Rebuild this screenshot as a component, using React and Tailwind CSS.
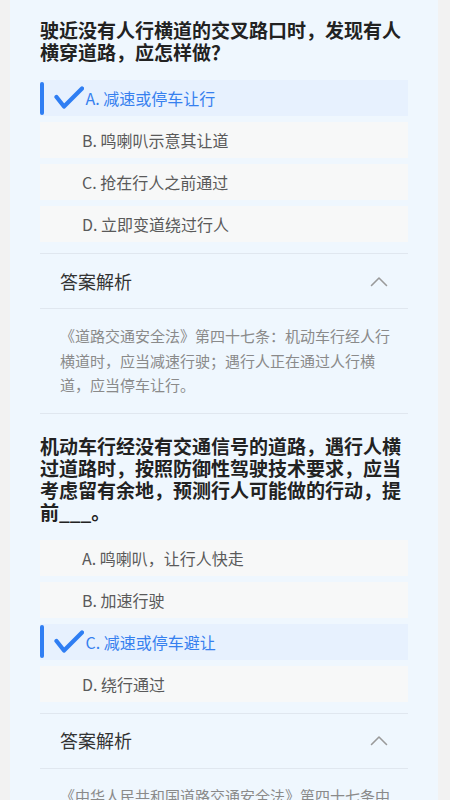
import React from "react";

const FONT = { fontFamily: '"Noto Sans CJK SC", "Noto Sans", sans-serif' };

function Check() {
  return (
    <svg width="30" height="24" viewBox="0 0 30 24" className="ml-[10px] shrink-0">
      <path d="M2.5 11 L10 20.5 L28 2.5" fill="none" stroke="#2f7ef3" strokeWidth="4.2" strokeLinecap="round" strokeLinejoin="round" />
    </svg>
  );
}

function Option({ text, selected }) {
  if (selected) {
    return (
      <div className="flex h-[36px] items-center bg-[#e7f1fe]">
        <span className="h-[33px] w-[3.5px] shrink-0 rounded-full bg-[#2f7ef3]" />
        <Check />
        <span className="ml-[2px] text-[16px] text-[#3680ef]">{text}</span>
      </div>
    );
  }
  return (
    <div className="flex h-[36px] items-center bg-[#f7f8f8] pl-[42px]">
      <span className="text-[16px] text-[#5a5a5a]">{text}</span>
    </div>
  );
}

function Chevron() {
  return (
    <svg width="18" height="11" viewBox="0 0 18 11">
      <path d="M1.5 9.5 L9 2 L16.5 9.5" fill="none" stroke="#9a9a9a" strokeWidth="1.6" strokeLinecap="round" strokeLinejoin="round" />
    </svg>
  );
}

function Question({ title, options, explanation, first }) {
  return (
    <div>
      <div className={`${first ? "pt-[19px]" : "pt-[21px]"} text-[19px] font-bold leading-[22px] text-[#222222]`}>
        {title}
      </div>
      <div className="mt-[17px] flex flex-col gap-[6px]">
        {options.map((o) => (
          <Option key={o.text} text={o.text} selected={o.selected} />
        ))}
      </div>
      <div className="mt-[11px] h-px bg-[#e0e7ef]" />
      <div className="flex h-[54px] items-center justify-between pl-[20px] pr-[20px]">
        <span className="text-[18px] text-[#333333]">答案解析</span>
        <Chevron />
      </div>
      <div className="h-px bg-[#e0e7ef]" />
      <div className="pb-[15px] pl-[20px] pr-[12px] pt-[15px] text-[15px] leading-[24.5px] text-[#8a8a8a]">
        {explanation}
      </div>
      <div className="h-px bg-[#e0e7ef]" />
    </div>
  );
}

export default function App() {
  return (
    <div className="min-h-screen bg-[#f2f2f2] pl-[10px] pr-[12px]" style={FONT}>
      <div className="min-h-screen bg-[#eff7fe] px-[30px] pb-[30px]">
        <Question
          first
          title="驶近没有人行横道的交叉路口时，发现有人横穿道路，应怎样做？"
          options={[
            { text: "A. 减速或停车让行", selected: true },
            { text: "B. 鸣喇叭示意其让道" },
            { text: "C. 抢在行人之前通过" },
            { text: "D. 立即变道绕过行人" },
          ]}
          explanation="《道路交通安全法》第四十七条：机动车行经人行横道时，应当减速行驶；遇行人正在通过人行横道，应当停车让行。"
        />
        <Question
          title="机动车行经没有交通信号的道路，遇行人横过道路时，按照防御性驾驶技术要求，应当考虑留有余地，预测行人可能做的行动，提前___。"
          options={[
            { text: "A. 鸣喇叭，让行人快走" },
            { text: "B. 加速行驶" },
            { text: "C. 减速或停车避让", selected: true },
            { text: "D. 绕行通过" },
          ]}
          explanation="《中华人民共和国道路交通安全法》第四十七条中规定：机动车行经没有交通信号的道路时，遇行人横过道路，应当避让。"
        />
      </div>
    </div>
  );
}
